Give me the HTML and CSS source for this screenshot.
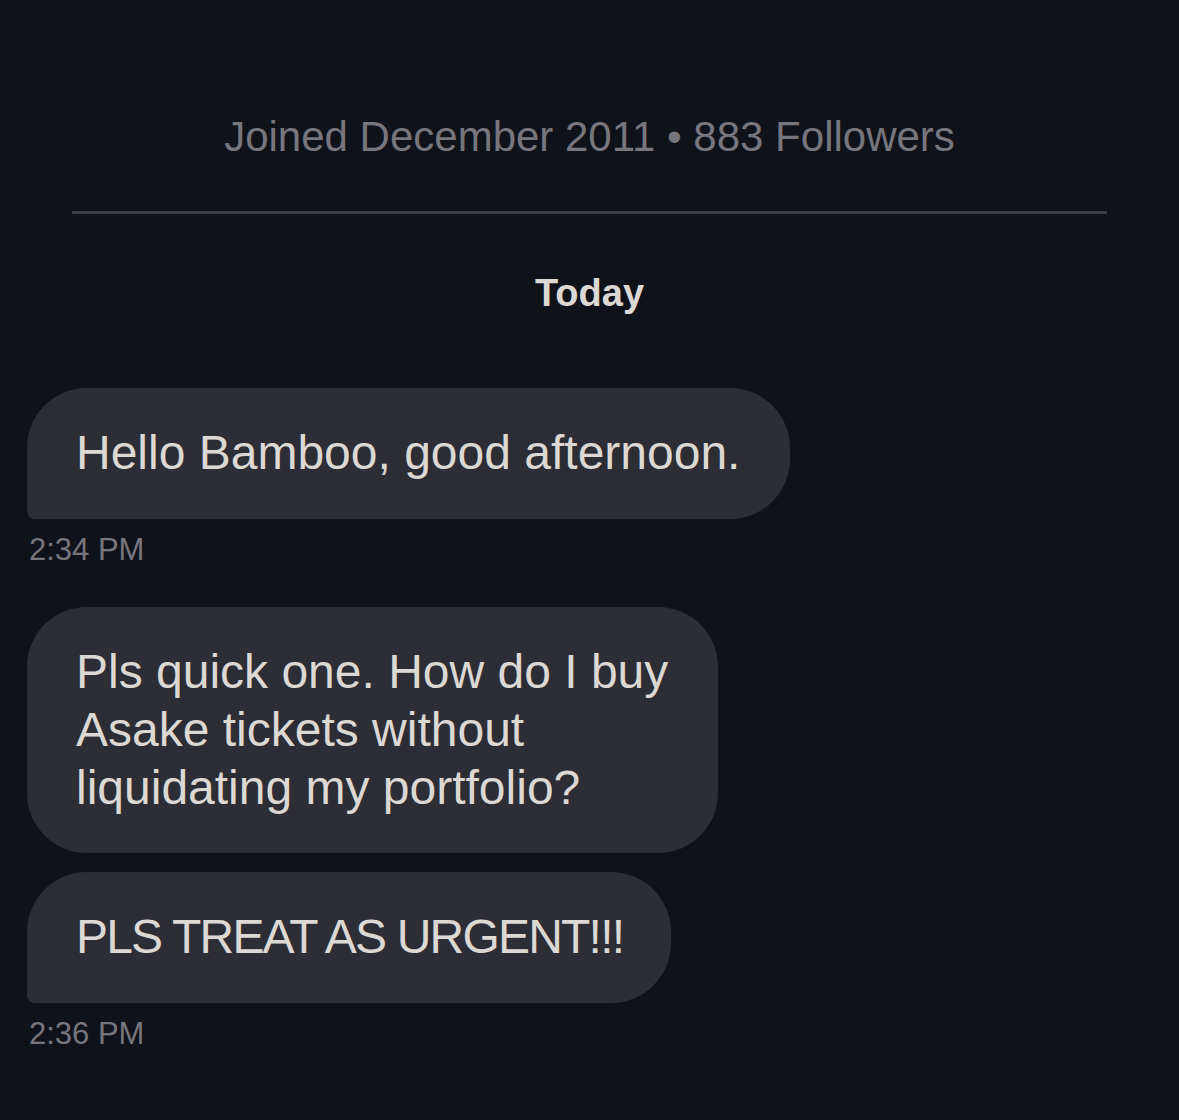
FILE: index.html
```html
<!DOCTYPE html>
<html lang="en">

<head>
  <meta charset="UTF-8">
  <title>Messages</title>
  <meta name="viewport" content="width=device-width, initial-scale=1.0">
  <link rel="stylesheet" href="styles.css">
</head>

<body>
  <main class="thread">
    <header class="profile">
      <p class="profile-meta">Joined December 2011 &bull; 883 Followers</p>
    </header>

    <div class="day">Today</div>

    <section class="group">
      <div class="bubble bubble-last">Hello Bamboo, good afternoon.</div>
      <time class="stamp">2:34 PM</time>
    </section>

    <section class="group">
      <div class="bubble bubble-round">Pls quick one. How do I buy<br>Asake tickets without<br>liquidating my portfolio?</div>
      <div class="bubble bubble-last bubble-caps">PLS TREAT AS URGENT!!!</div>
      <time class="stamp">2:36 PM</time>
    </section>
  </main>
</body>

</html>
```

FILE: styles.css
```css
* {
  margin: 0;
  padding: 0;
  box-sizing: border-box;
}

body {
  width: 100%;
  min-height: 100vh;
  background: #10121a;
  font-family: "Liberation Sans", Arial, sans-serif;
  overflow: hidden;
}

.thread {
  padding: 0 27px;
}

.profile {
  margin: 0 45px;
  padding-top: 112px;
  height: 214px;
  border-bottom: 3px solid #3c3b43;
  text-align: center;
}

.profile-meta {
  font-size: 42px;
  line-height: 50px;
  color: #77767c;
}

.day {
  margin-top: 56px;
  text-align: center;
  font-size: 38px;
  line-height: 46px;
  font-weight: bold;
  color: #dcd8d4;
}

.group {
  display: flex;
  flex-direction: column;
  align-items: flex-start;
  gap: 19px;
  margin-top: 37px;
}

.group:first-of-type {
  margin-top: 72px;
}

.bubble {
  padding: 36px 50px 36px 49px;
  background: #2d2d35;
  color: #dcd8d4;
  font-size: 48px;
  line-height: 58px;
  border-radius: 60px;
}

.bubble-last {
  padding-bottom: 37px;
  border-bottom-left-radius: 8px;
}

.bubble-caps {
  padding-right: 48px;
  letter-spacing: -1.8px;
}

.stamp {
  margin-top: -8px;
  padding-left: 2px;
  font-size: 31px;
  line-height: 40px;
  color: #77767c;
}
```
